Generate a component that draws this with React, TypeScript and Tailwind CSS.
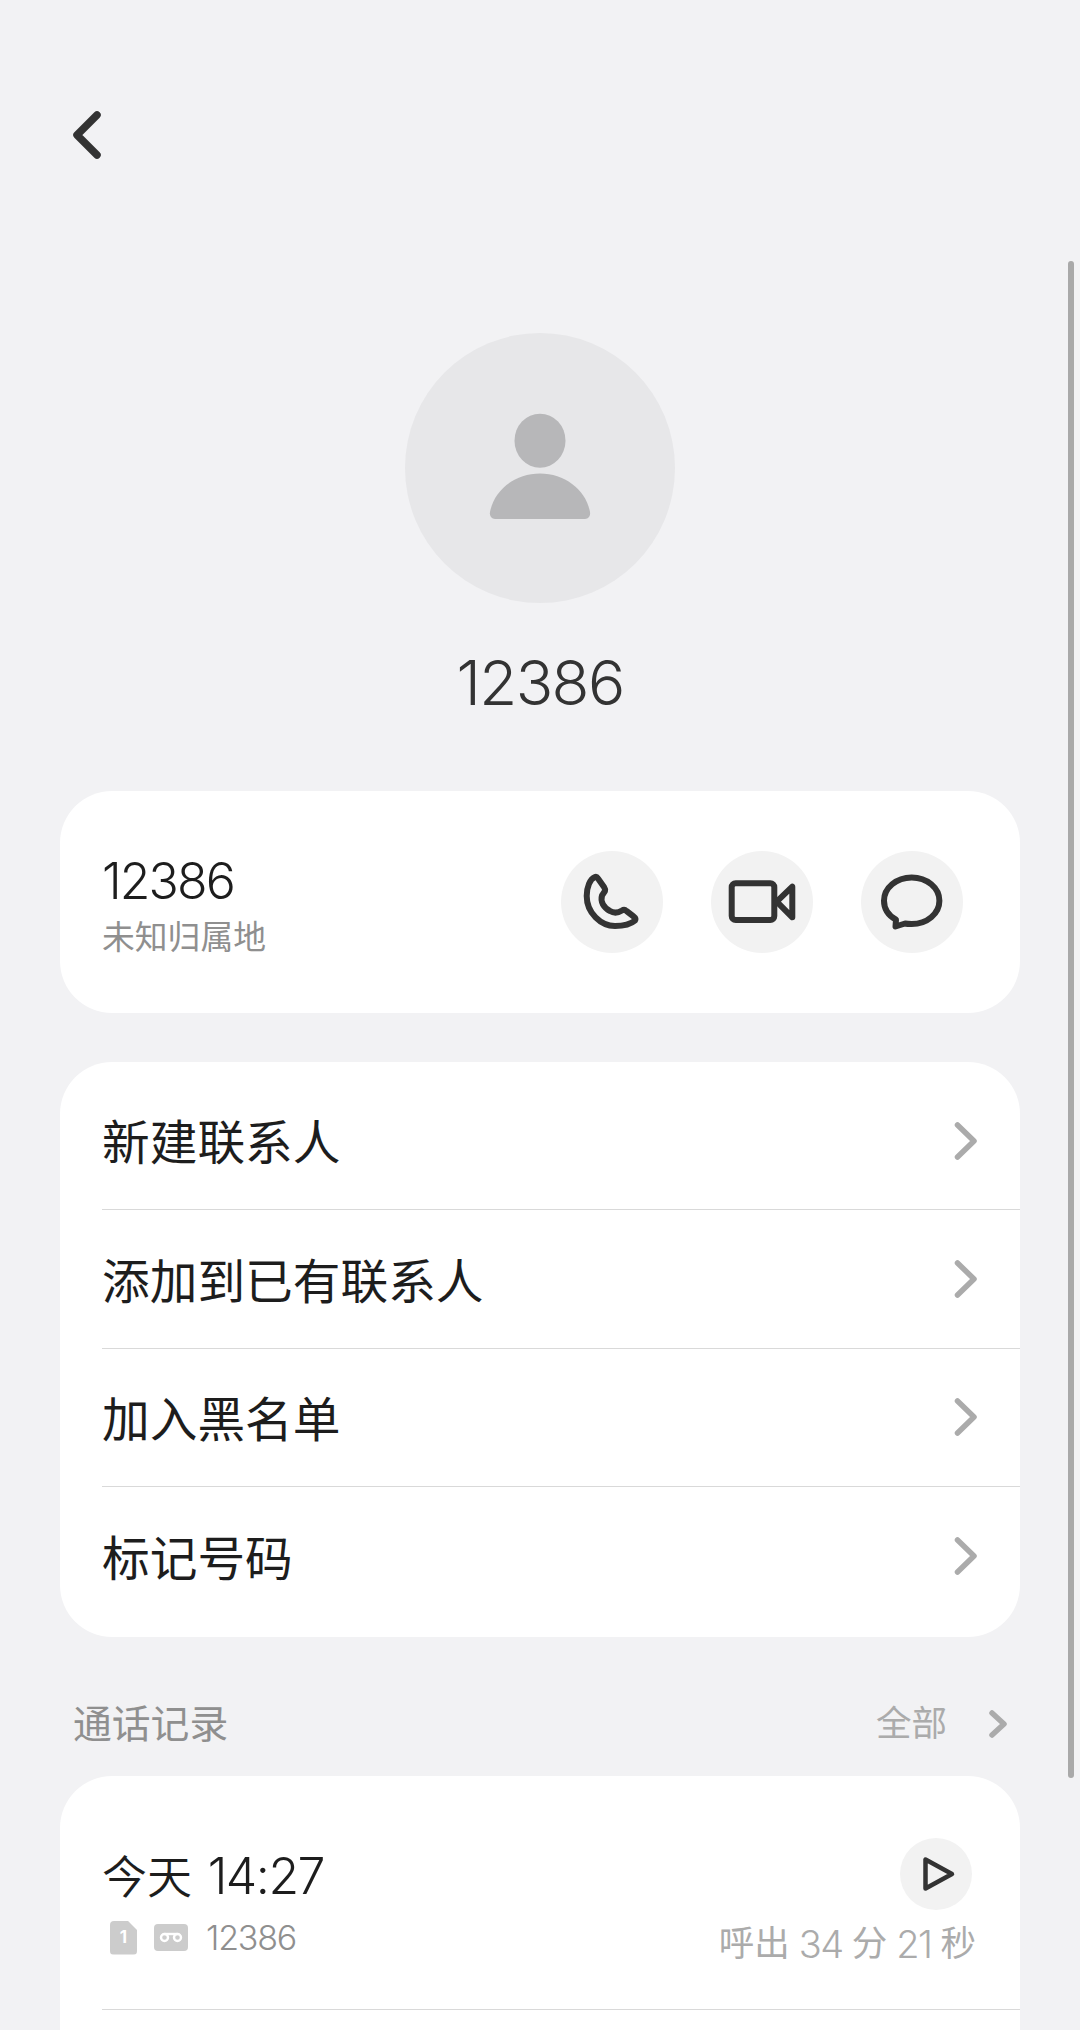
const sans = 'font-[Inter,"Noto_Sans_CJK_SC",sans-serif]';

const menuItems = ['新建联系人', '添加到已有联系人', '加入黑名单', '标记号码'];

function Chevron({ className = '' }: { className?: string }) {
  return (
    <svg viewBox="0 0 24 38" className={`h-[38px] w-[24px] ${className}`} fill="none" stroke="#ababab" strokeWidth="5.5" strokeLinecap="round" strokeLinejoin="round">
      <path d="M3.5 3 L20 19 L3.5 35" />
    </svg>
  );
}

function RoundAction({ children }: { children: React.ReactNode }) {
  return (
    <div className="h-[102px] w-[102px] rounded-full bg-[#f2f2f2]">
      <svg viewBox="0 0 102 102" className="h-[102px] w-[102px]" fill="none" stroke="#333333" strokeWidth="6" strokeLinejoin="round" strokeLinecap="round">
        {children}
      </svg>
    </div>
  );
}

export default function App() {
  return (
    <div className={`relative h-[2030px] w-[1080px] overflow-hidden bg-[#f2f2f4] ${sans}`}>
      <div className="absolute right-[6px] top-[261px] h-[1517px] w-[6px] rounded-full bg-[#a9a9a9]" />

      <div className="pl-[72px] pt-[110px]">
        <svg viewBox="0 0 30 50" className="h-[50px] w-[30px]" fill="none" stroke="#333333" strokeWidth="7.5" strokeLinecap="round" strokeLinejoin="round">
          <path d="M25 5 L5 25 L25 45" />
        </svg>
      </div>

      <div className="mt-[173px] flex flex-col items-center">
        <div className="h-[270px] w-[270px] rounded-full bg-[#e7e7e9]">
          <svg viewBox="0 0 270 270" className="h-[270px] w-[270px]" fill="#b7b7b9">
            <ellipse cx="135" cy="107.7" rx="25.5" ry="27" />
            <path d="M135 140.5 C 110 140.5 89 157 85 179 C 84.4 183 86.5 186 90 186 L 180 186 C 183.5 186 185.6 183 185 179 C 181 157 160 140.5 135 140.5 Z" />
          </svg>
        </div>
        <div className="mt-[42px] h-[76px] text-[62px] font-[350] leading-[76px] tracking-[-1.6px] text-[#333333]">12386</div>
      </div>

      <div className="mx-[60px] mt-[70px] flex h-[222px] items-center justify-between rounded-[52px] bg-white pl-[42px] pr-[57px]">
        <div className="pt-[7px]">
          <div className="-mt-[2px] text-[50px] font-[350] leading-[56px] tracking-[-1.9px] text-[#1d1d1d]">12386</div>
          <div className="mt-[8px] text-[32.8px] leading-[40px] text-[#8f8f8f]">未知归属地</div>
        </div>
        <div className="flex gap-[48px]">
          <RoundAction>
            <path d="M34 26 C 29 28 25.7 36 25.7 45 C 25.7 62 40 75 54 75 C 62 75 70 73 74 69.5 C 75 68 74 66.5 72 65 L 65.5 60 C 64 58.5 62.5 58.5 61 59.5 C 57 62 53 62.5 49 60 C 43 57 39 51 41 44.5 L 44 40 C 44.5 38.5 44 37.5 43 36 L 37 27.5 C 36 26 35 25.5 34 26 Z" />
          </RoundAction>
          <RoundAction>
            <rect x="20.7" y="32.3" width="42.6" height="36.7" rx="4" />
            <path d="M65.7 50.7 L81.3 35.7 L81.3 66.3 Z" />
          </RoundAction>
          <RoundAction>
            <path d="M44 72.5 C 46 73 48 73 50.7 73 C 66 73 78.4 62.6 78.4 49.7 C 78.4 36.8 66 26.4 50.7 26.4 C 35.4 26.4 23 36.8 23 49.7 C 23 57.5 27.5 64.5 35 68.7 L 34.5 75.5 Z" />
          </RoundAction>
        </div>
      </div>

      <div className="mx-[60px] mt-[49px] rounded-[52px] bg-white pb-[11px] pl-[42px] pt-[10px]">
        {menuItems.map((label, i) => (
          <div
            key={label}
            className={`flex h-[138.4px] items-center justify-between pr-[42px] text-[47.7px] text-[#1d1d1d] ${i < menuItems.length - 1 ? 'border-b border-[#d9d9d9]' : ''}`}
          >
            <span className="pt-[7px]">{label}</span>
            <Chevron />
          </div>
        ))}
      </div>

      <div className="mx-[73px] mt-[59px] flex h-[56px] items-center justify-between">
        <span className="pt-[2px] text-[38.8px] text-[#8f8f8f]">通话记录</span>
        <div className="flex items-center gap-[42px]">
          <span className="text-[35.5px] text-[#ababab]">全部</span>
          <svg viewBox="0 0 18 28" className="h-[28px] w-[18px]" fill="none" stroke="#ababab" strokeWidth="5.5" strokeLinecap="round" strokeLinejoin="round">
            <path d="M3 3 L15 14 L3 25" />
          </svg>
        </div>
      </div>

      <div className="mx-[60px] mt-[24px] h-[400px] rounded-[52px] bg-white pl-[42px]">
        <div className="flex h-[234px] justify-between border-b border-[#d9d9d9] pr-[44px]">
          <div className="pt-[72px]">
            <div className="text-[45px] font-[350] leading-[56px] text-[#1d1d1d]">
              今天 <span className="ml-[3px] text-[50px] tracking-[-1.5px]">14:27</span>
            </div>
            <div className="mt-[12px] flex items-center pl-[8px]">
              <div className="relative h-[34px] w-[27px] rounded-[4px] bg-[#cccccc] [clip-path:polygon(0_0,65%_0,100%_28%,100%_100%,0_100%)]">
                <span className="absolute inset-0 flex items-center justify-center text-[17px] font-bold text-white">1</span>
              </div>
              <svg viewBox="0 0 34 27" className="ml-[17px] h-[27px] w-[34px]">
                <rect width="34" height="27" rx="4" fill="#cccccc" />
                <circle cx="10.5" cy="13.5" r="3.5" fill="none" stroke="#ffffff" strokeWidth="2.4" />
                <circle cx="23.5" cy="13.5" r="3.5" fill="none" stroke="#ffffff" strokeWidth="2.4" />
                <path d="M10.5 10 H23.5" stroke="#ffffff" strokeWidth="2.4" />
              </svg>
              <span className="ml-[18px] text-[34px] font-light leading-[40px] tracking-[-1.2px] text-[#8f8f8f]">12386</span>
            </div>
          </div>
          <div className="flex flex-col items-end pt-[62px]">
            <div className="mr-[4px] h-[72px] w-[72px] rounded-full bg-[#f2f2f2]">
              <svg viewBox="0 0 72 72" className="h-[72px] w-[72px]" fill="none" stroke="#333333" strokeWidth="4.5" strokeLinejoin="round" strokeLinecap="round">
                <path d="M25.5 21.5 L25.5 50.5 L52 36 Z" />
              </svg>
            </div>
            <div className="mt-[10px] flex items-center gap-[9px] text-[35.5px] leading-[48px] text-[#ababab]">
              <span>呼出</span>
              <span className="text-[38px] font-light tracking-[-1.5px]">34</span>
              <span>分</span>
              <span className="text-[38px] font-light tracking-[-1.5px]">21</span>
              <span>秒</span>
            </div>
          </div>
        </div>
      </div>
    </div>
  );
}
